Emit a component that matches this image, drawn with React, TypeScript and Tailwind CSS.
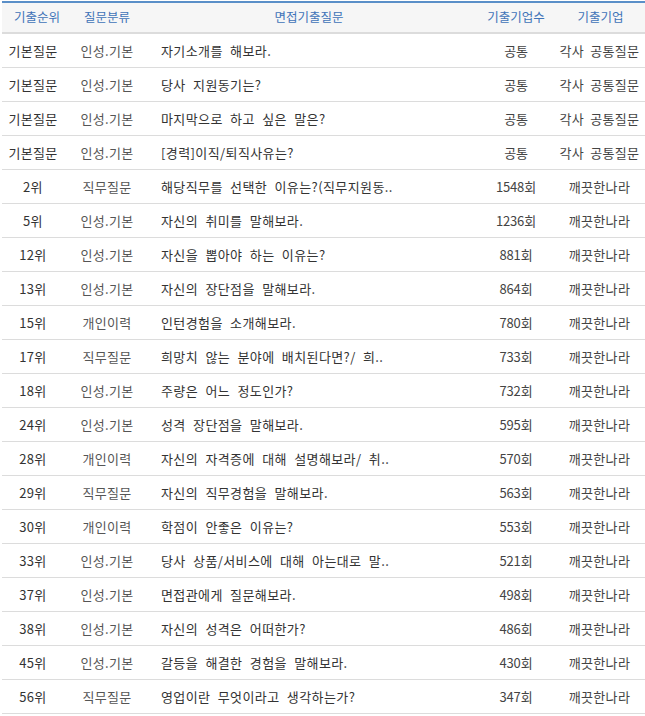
import React from "react";

type Row = [string, string, string, string, string];

const rows: Row[] = [
  ["기본질문", "인성.기본", "자기소개를 해보라.", "공통", "각사 공통질문"],
  ["기본질문", "인성.기본", "당사 지원동기는?", "공통", "각사 공통질문"],
  ["기본질문", "인성.기본", "마지막으로 하고 싶은 말은?", "공통", "각사 공통질문"],
  ["기본질문", "인성.기본", "[경력]이직/퇴직사유는?", "공통", "각사 공통질문"],
  ["2위", "직무질문", "해당직무를 선택한 이유는?(직무지원동..", "1548회", "깨끗한나라"],
  ["5위", "인성.기본", "자신의 취미를 말해보라.", "1236회", "깨끗한나라"],
  ["12위", "인성.기본", "자신을 뽑아야 하는 이유는?", "881회", "깨끗한나라"],
  ["13위", "인성.기본", "자신의 장단점을 말해보라.", "864회", "깨끗한나라"],
  ["15위", "개인이력", "인턴경험을 소개해보라.", "780회", "깨끗한나라"],
  ["17위", "직무질문", "희망치 않는 분야에 배치된다면?/ 희..", "733회", "깨끗한나라"],
  ["18위", "인성.기본", "주량은 어느 정도인가?", "732회", "깨끗한나라"],
  ["24위", "인성.기본", "성격 장단점을 말해보라.", "595회", "깨끗한나라"],
  ["28위", "개인이력", "자신의 자격증에 대해 설명해보라/ 취..", "570회", "깨끗한나라"],
  ["29위", "직무질문", "자신의 직무경험을 말해보라.", "563회", "깨끗한나라"],
  ["30위", "개인이력", "학점이 안좋은 이유는?", "553회", "깨끗한나라"],
  ["33위", "인성.기본", "당사 상품/서비스에 대해 아는대로 말..", "521회", "깨끗한나라"],
  ["37위", "인성.기본", "면접관에게 질문해보라.", "498회", "깨끗한나라"],
  ["38위", "인성.기본", "자신의 성격은 어떠한가?", "486회", "깨끗한나라"],
  ["45위", "인성.기본", "갈등을 해결한 경험을 말해보라.", "430회", "깨끗한나라"],
  ["56위", "직무질문", "영업이란 무엇이라고 생각하는가?", "347회", "깨끗한나라"],
];

const cols = "grid grid-cols-[70px_70px_334px_80px_89px] items-center";

export default function App() {
  return (
    <div className="bg-white pl-[2px] pt-[1px] leading-none font-['Noto_Sans_CJK_KR','Noto_Sans',sans-serif]">
      <div className="w-[643px]">
        <div
          className={`${cols} h-[33px] bg-[#f6f6f6] border-t-2 border-t-[#5a8fc8] border-b-2 border-b-[#dcdcdc] text-[#3f73b8] text-[12.5px]`}
        >
          <div className="text-center">기출순위</div>
          <div className="text-center">질문분류</div>
          <div className="text-center">면접기출질문</div>
          <div className="text-center">기출기업수</div>
          <div className="text-center">기출기업</div>
        </div>
        {rows.map((r, i) => (
          <div
            key={i}
            className={`${cols} h-[34px] border-b border-b-[#dcdcdc] text-[13px] tracking-[0.3px]`}
          >
            <div className="text-center text-[#333] pr-[8px]">{r[0]}</div>
            <div className="text-center text-[#555]">{r[1]}</div>
            <div className="pl-[19px] text-[#333] whitespace-nowrap [word-spacing:4px] tracking-[0.4px]">
              {r[2]}
            </div>
            <div className="text-center text-[#444] tracking-[-0.2px]">{r[3]}</div>
            <div className="text-center text-[#444] whitespace-nowrap [word-spacing:3px] pr-[2px]">
              {r[4]}
            </div>
          </div>
        ))}
      </div>
    </div>
  );
}
